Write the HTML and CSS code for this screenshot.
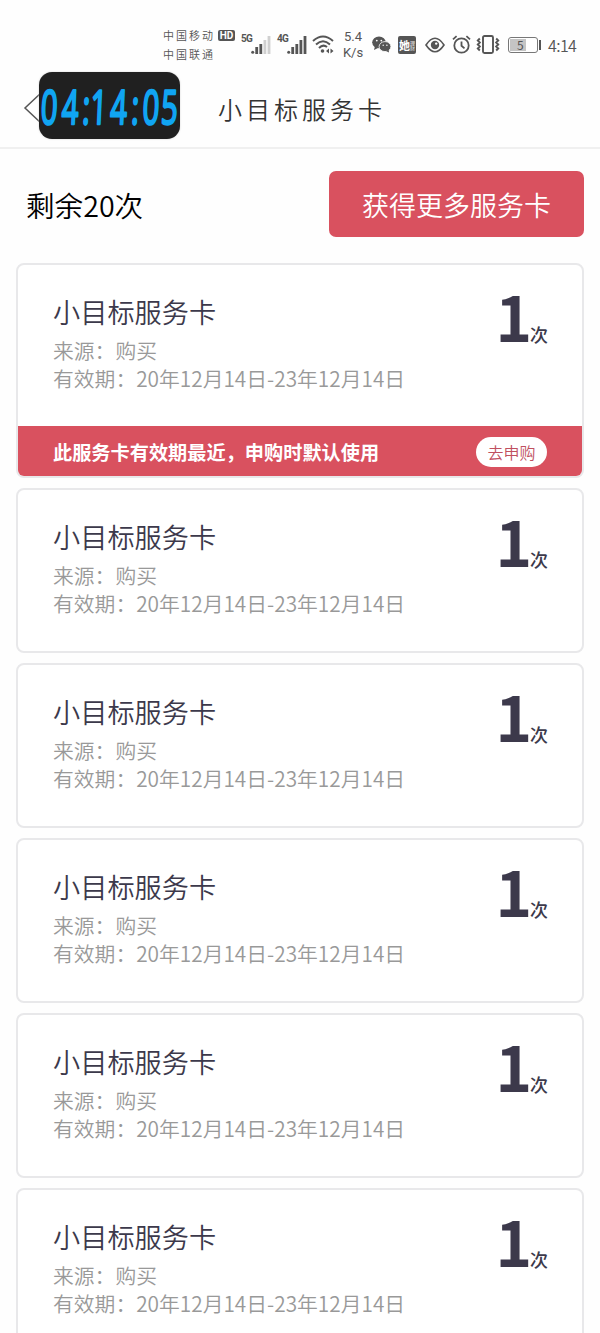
FILE: index.html
```
<!DOCTYPE html>
<html lang="zh-CN">
<head>
    <meta charset="UTF-8">
    <meta name="viewport" content="width=device-width, initial-scale=1.0">
    <title>小目标服务卡</title>
    <link rel="stylesheet" href="styles.css">
</head>
<body>
    <!-- 状态栏 -->
    <div class="status">
        <div class="carriers">
            <div class="carrier">中国移动<span class="hd">HD</span></div>
            <div class="carrier">中国联通</div>
        </div>
        <div class="signal">
            <span class="net">5G</span>
            <svg width="20" height="18" viewBox="0 0 20 18" fill="#555">
                <circle cx="1.7" cy="16.2" r="1.5"/>
                <rect x="4.3" y="11" width="2.8" height="7"/>
                <rect x="8.4" y="8" width="2.8" height="10"/>
                <rect x="12.5" y="4" width="2.8" height="14" fill="#d0d0d0"/>
                <rect x="16.6" y="0" width="2.8" height="18" fill="#d0d0d0"/>
            </svg>
        </div>
        <div class="signal">
            <span class="net">4G</span>
            <svg width="20" height="18" viewBox="0 0 20 18" fill="#555">
                <circle cx="1.7" cy="16.2" r="1.5"/>
                <rect x="4.3" y="11" width="2.8" height="7"/>
                <rect x="8.4" y="8" width="2.8" height="10"/>
                <rect x="12.5" y="4" width="2.8" height="14"/>
                <rect x="16.6" y="0" width="2.8" height="18"/>
            </svg>
        </div>
        <svg class="wifi" width="22" height="19" viewBox="0 0 22 19" fill="none" stroke="#555" stroke-width="2">
            <path d="M1 6Q11-3 21 6"/>
            <path d="M4 9.5Q11 3 18 9.5"/>
            <path d="M7 13Q11 8.8 15 12"/>
            <circle cx="10.5" cy="16" r="1.8" fill="#555" stroke="none"/>
            <path d="M14 16l3-2.6v5.2zM21.5 16l-3-2.6v5.2z" fill="#555" stroke="none"/>
        </svg>
        <div class="speed">5.4<br>K/s</div>
        <svg class="wechat" width="19" height="17" viewBox="0 0 19 17">
            <ellipse cx="7" cy="6.3" rx="6.8" ry="5.9" fill="#555"/>
            <path d="M3 10l-1 4 4-2z" fill="#555"/>
            <ellipse cx="13" cy="10.6" rx="5.9" ry="5" fill="#555" stroke="#fff" stroke-width=".8"/>
            <path d="M14 15l3 1.6-.4-3z" fill="#555"/>
            <g fill="#fff">
                <circle cx="4.8" cy="4.6" r=".9"/>
                <circle cx="9.3" cy="4.6" r=".9"/>
                <circle cx="11.2" cy="9.3" r=".7"/>
                <circle cx="14.9" cy="9.3" r=".7"/>
            </g>
        </svg>
        <div class="app"><b>她</b><i>理财</i></div>
        <svg class="eye" width="20" height="16" viewBox="0 0 20 16" fill="none" stroke="#555" stroke-width="1.6">
            <path d="M1 8Q10-5.5 19 8Q10 21.5 1 8z"/>
            <circle cx="10" cy="8" r="4.2" fill="#555" stroke="none"/>
            <circle cx="11.2" cy="6.6" r="1.2" fill="#fff" stroke="none"/>
        </svg>
        <svg class="alarm" width="19" height="19" viewBox="0 0 19 19" fill="none" stroke="#555" stroke-width="1.8">
            <circle cx="9.5" cy="10.5" r="7.2"/>
            <path d="M9.5 6.5v4.3l3 2.6M1 4.4L4.6 1.2M18 4.4L14.4 1.2"/>
        </svg>
        <svg class="vibrate" width="24" height="19" viewBox="0 0 24 19" fill="none" stroke="#555" stroke-width="1.9">
            <rect x="7" y="1" width="10" height="17" rx="1.5"/>
            <path d="M3.8 3.5l-2 2 2 2-2 2 2 2-2 2 2 2M20.2 3.5l2 2-2 2 2 2-2 2 2 2-2 2"/>
        </svg>
        <div class="battery"><div class="level">5</div></div>
        <div class="time">4:14</div>
    </div>

    <!-- 标题栏 -->
    <div class="header">
        <svg class="back" width="20" height="36" viewBox="0 0 20 36" fill="none" stroke="#555" stroke-width="1.5">
            <path d="M19 2L2 18l17 16"/>
        </svg>
        <h1>小目标服务卡</h1>
        <svg class="clock" width="141" height="67" viewBox="0 0 141 67">
            <text transform="translate(0 52) scale(.62 1) skewX(-4)" x="2 36 69 82 114 148 166 196">04:14:05</text>
        </svg>
    </div>

    <div class="summary">
        <div class="count">剩余20次</div>
        <button class="more">获得更多服务卡</button>
    </div>

    <div class="list">
        <div class="card">
            <div class="info">
                <div class="text">
                    <h2>小目标服务卡</h2>
                    <p>来源：购买</p>
                    <p>有效期：20年12月14日-23年12月14日</p>
                </div>
                <div class="times"><b>1</b><span>次</span></div>
            </div>
            <div class="tip">
                <span>此服务卡有效期最近，申购时默认使用</span>
                <button class="buy">去申购</button>
            </div>
        </div>
        <div class="card">
            <div class="info">
                <div class="text">
                    <h2>小目标服务卡</h2>
                    <p>来源：购买</p>
                    <p>有效期：20年12月14日-23年12月14日</p>
                </div>
                <div class="times"><b>1</b><span>次</span></div>
            </div>
        </div>
        <div class="card">
            <div class="info">
                <div class="text">
                    <h2>小目标服务卡</h2>
                    <p>来源：购买</p>
                    <p>有效期：20年12月14日-23年12月14日</p>
                </div>
                <div class="times"><b>1</b><span>次</span></div>
            </div>
        </div>
        <div class="card">
            <div class="info">
                <div class="text">
                    <h2>小目标服务卡</h2>
                    <p>来源：购买</p>
                    <p>有效期：20年12月14日-23年12月14日</p>
                </div>
                <div class="times"><b>1</b><span>次</span></div>
            </div>
        </div>
        <div class="card">
            <div class="info">
                <div class="text">
                    <h2>小目标服务卡</h2>
                    <p>来源：购买</p>
                    <p>有效期：20年12月14日-23年12月14日</p>
                </div>
                <div class="times"><b>1</b><span>次</span></div>
            </div>
        </div>
        <div class="card">
            <div class="info">
                <div class="text">
                    <h2>小目标服务卡</h2>
                    <p>来源：购买</p>
                    <p>有效期：20年12月14日-23年12月14日</p>
                </div>
                <div class="times"><b>1</b><span>次</span></div>
            </div>
        </div>
    </div>
</body>
</html>
```
FILE: styles.css
```
* {
    box-sizing: border-box;
}

body {
    margin: 0;
    height: 1333px;
    overflow: hidden;
    background-color: #fefefe;
    font-family: "Noto Sans CJK SC", sans-serif;
    font-weight: 350;
}

h1, h2, p {
    margin: 0;
    font-weight: 350;
}

button {
    border: none;
    padding: 0;
    font-family: inherit;
    font-weight: 350;
}

/* 状态栏 */
.status {
    display: flex;
    align-items: center;
    height: 72px;
    padding: 17px 0 0 163px;
    color: #555;
}

.carriers {
    width: 78px;
}

.carrier {
    display: flex;
    align-items: center;
    height: 19px;
    font-size: 11px;
    letter-spacing: 2px;
    white-space: nowrap;
}

.hd {
    width: 17px;
    height: 11px;
    margin-left: 3px;
    border-radius: 2px;
    background-color: #555;
    color: #fff;
    font: bold 10px/11px Roboto, sans-serif;
    letter-spacing: 0;
    text-align: center;
}

.signal {
    display: flex;
    align-items: flex-start;
    width: 36px;
    height: 18px;
}

.net {
    width: 10px;
    margin-top: -3px;
    font: bold 10px/12px Roboto, sans-serif;
    letter-spacing: -0.8px;
}

.wifi {
    margin-left: -1px;
}

.speed {
    width: 22px;
    margin-left: 8px;
    font: 13px/16px Roboto, sans-serif;
    text-align: center;
}

.wechat {
    margin-left: 8px;
}

.app {
    display: flex;
    align-items: center;
    justify-content: center;
    width: 18px;
    height: 18px;
    margin-left: 7px;
    border-radius: 2px;
    background-color: #555;
    color: #fff;
    font-size: 11px;
    line-height: 18px;
}

.app i {
    width: 5px;
    font-size: 5px;
    line-height: 5px;
    font-style: normal;
}

.eye {
    margin-left: 9px;
}

.alarm {
    margin-left: 7px;
}

.vibrate {
    margin-left: 5px;
}

.battery {
    position: relative;
    width: 30px;
    height: 16px;
    margin-left: 8px;
    padding: 1px;
    border: 1.5px solid #777;
    border-radius: 3px;
}

.battery::after {
    content: "";
    position: absolute;
    top: 2px;
    right: -4px;
    width: 2px;
    height: 10px;
    background-color: #555;
}

.level {
    width: 16px;
    height: 12px;
    padding-left: 7px;
    background-color: #c4c4c4;
    font: 12px/12px "Noto Sans CJK SC", sans-serif;
}

.time {
    margin-left: 10px;
    font-size: 16px;
    letter-spacing: -0.6px;
}

/* 标题栏 */
.header {
    position: relative;
    display: flex;
    align-items: center;
    height: 77px;
    padding-left: 23px;
    border-bottom: 2px solid #f0f0f0;
}

.back {
    margin-top: -3px;
}

.header h1 {
    margin: -2px 0 0 175px;
    font-size: 24px;
    line-height: 36px;
    letter-spacing: 4px;
    color: #333;
}

/* 悬浮时钟 */
.clock {
    position: absolute;
    left: 39px;
    top: 0;
    border-radius: 13px;
    background-color: #202020;
    box-shadow: 0 0 2px #ccc;
}

.clock text {
    fill: #10a5f2;
    stroke: #10a5f2;
    stroke-width: 2.5px;
    stroke-linejoin: round;
    font: 400 47px "Open Sans", sans-serif;
}

.summary {
    display: flex;
    align-items: center;
    justify-content: space-between;
    height: 66px;
    margin: 22px 16px 26px 26px;
}

.count {
    font-size: 28.6px;
    color: #000;
}

.more {
    width: 255px;
    height: 66px;
    border-radius: 7px;
    background-color: #d9515f;
    color: #fff;
    font-size: 27px;
}

/* 服务卡列表 */
.list {
    display: flex;
    flex-direction: column;
    gap: 10px;
    padding: 0 16px;
}

.card {
    flex: none;
    border: 2px solid #e8e8ea;
    border-radius: 8px;
    background-color: #fff;
    overflow: hidden;
}

.info {
    display: flex;
    justify-content: space-between;
    height: 161px;
    padding: 26px 34px 0 35px;
}

.text h2 {
    margin-bottom: 4.5px;
    font-size: 27.2px;
    line-height: 40px;
    color: #3c394b;
}

.text p {
    font-size: 20.8px;
    line-height: 28.5px;
    color: #999;
}

.times {
    display: flex;
    align-items: baseline;
    height: 60px;
    margin-top: -4px;
    color: #3c394b;
}

.times b {
    margin-right: -2px;
    font-size: 62px;
    line-height: 56px;
}

.times span {
    font-size: 18px;
    font-weight: 500;
}

.tip {
    display: flex;
    align-items: center;
    justify-content: space-between;
    height: 50px;
    padding: 1px 35px 0 35px;
    background-color: #d9515f;
    color: #fff;
    font-size: 19.2px;
    font-weight: bold;
}

.buy {
    width: 71px;
    height: 30px;
    border-radius: 15px;
    background-color: #fff;
    color: #c0505f;
    font-size: 16px;
}
```
